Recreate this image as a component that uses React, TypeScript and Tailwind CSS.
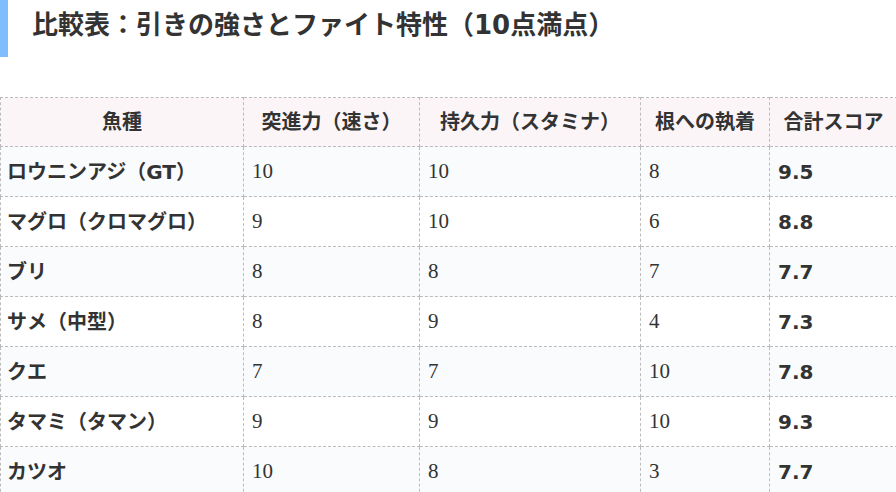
const rows: [string, number, number, number, string][] = [
  ["ロウニンアジ（GT）", 10, 10, 8, "9.5"],
  ["マグロ（クロマグロ）", 9, 10, 6, "8.8"],
  ["ブリ", 8, 8, 7, "7.7"],
  ["サメ（中型）", 8, 9, 4, "7.3"],
  ["クエ", 7, 7, 10, "7.8"],
  ["タマミ（タマン）", 9, 9, 10, "9.3"],
  ["カツオ", 10, 8, 3, "7.7"],
];

const headers = ["魚種", "突進力（速さ）", "持久力（スタミナ）", "根への執着", "合計スコア"];
const widths = ["w-[243px]", "w-[176px]", "w-[221px]", "w-[129px]", "w-[128px]"];

// bold text: Verdana-like latin, CJK falls back to Noto
const sans = "font-['DejaVu_Sans','Noto_Sans_CJK_JP',sans-serif]";
const serif = "font-['Liberation_Serif','Noto_Sans_CJK_JP',serif] text-[21px]";

export default function App() {
  return (
    <div className={`w-[896px] h-[492px] overflow-hidden bg-white text-[#333] ${sans}`}>
      <h2 className="flex h-[57px] items-start border-l-8 border-[#7fbdfc] pl-6 pt-[7px] text-[26px] font-bold leading-[36px]">
        比較表：引きの強さとファイト特性（10点満点）
      </h2>
      <div className="mt-10 overflow-hidden">
        <table className="w-[897px] table-fixed border-collapse text-[20px]">
          <thead>
            <tr className="h-[49px] bg-[#fcf5f7]">
              {headers.map((h, i) => (
                <th key={h} className={`${widths[i]} border border-dashed border-[#bbb] px-2 text-center font-bold`}>
                  {h}
                </th>
              ))}
            </tr>
          </thead>
          <tbody>
            {rows.map((r, i) => (
              <tr key={r[0]} className={`h-[50px] ${i % 2 === 0 ? "bg-[#f9fbfd]" : "bg-white"}`}>
                <td className="border border-dashed border-[#bbb] pl-1.5 pr-2 font-bold">{r[0]}</td>
                <td className={`border border-dashed border-[#bbb] px-2 ${serif}`}>{r[1]}</td>
                <td className={`border border-dashed border-[#bbb] px-2 ${serif}`}>{r[2]}</td>
                <td className={`border border-dashed border-[#bbb] px-2 ${serif}`}>{r[3]}</td>
                <td className="border border-dashed border-[#bbb] px-2 font-bold">{r[4]}</td>
              </tr>
            ))}
          </tbody>
        </table>
      </div>
    </div>
  );
}
